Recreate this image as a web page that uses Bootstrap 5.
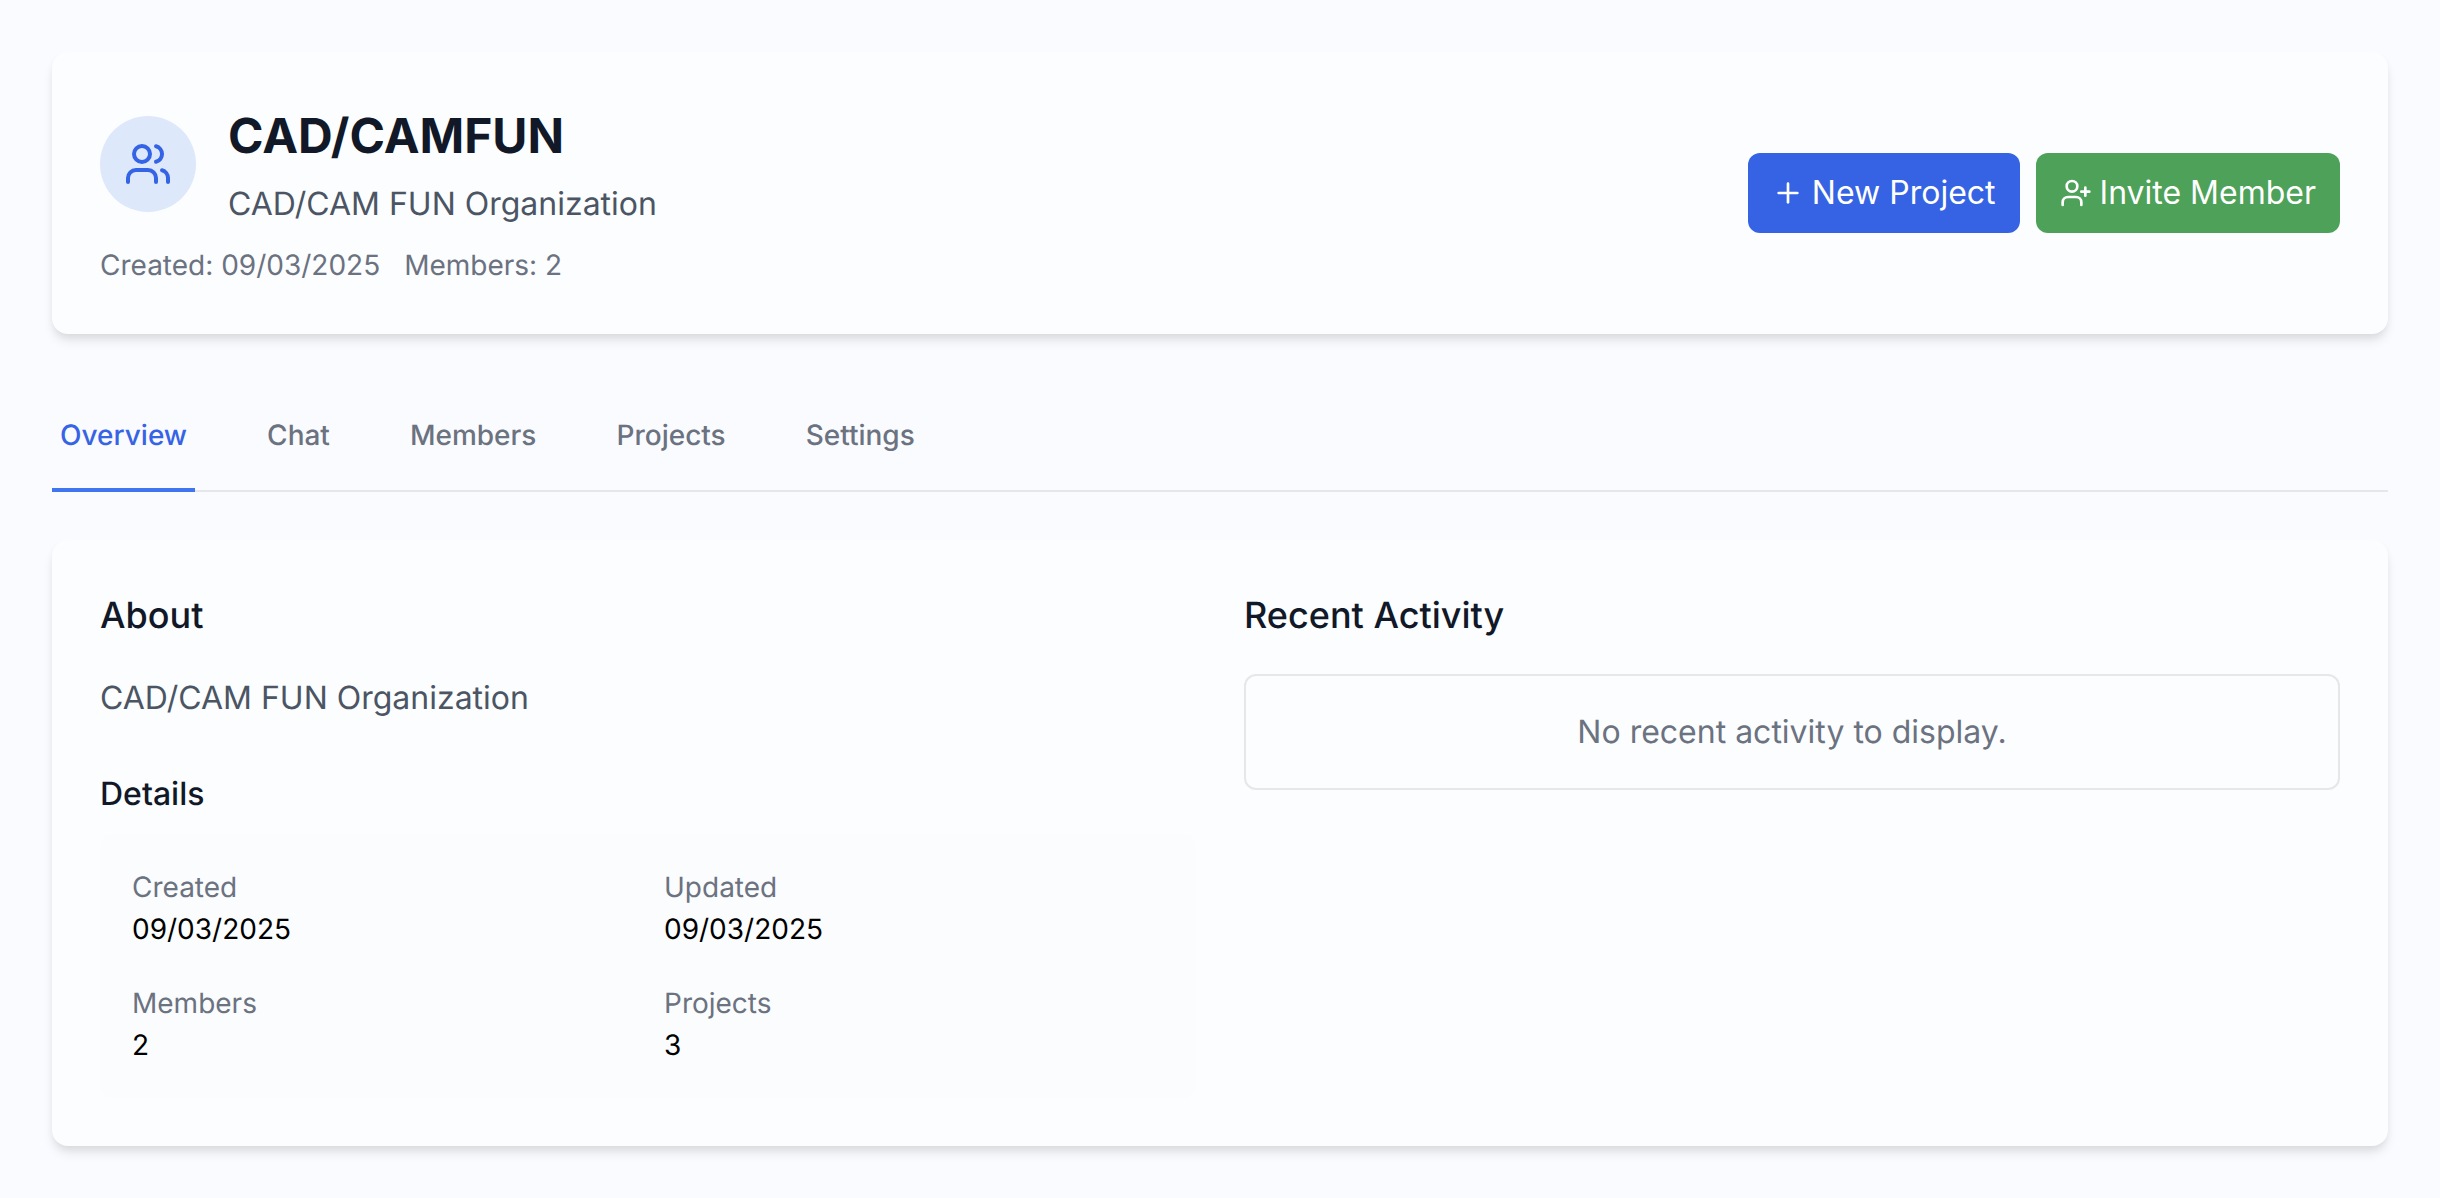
<!DOCTYPE html>
<html lang="en">
<head>
    <meta charset="UTF-8">
    <meta name="viewport" content="width=device-width, initial-scale=1.0">
    <link href="https://cdn.jsdelivr.net/npm/bootstrap@5.3.3/dist/css/bootstrap.min.css" rel="stylesheet">
    <script src="https://cdn.jsdelivr.net/npm/bootstrap@5.3.3/dist/js/bootstrap.bundle.min.js"></script>
    <title>CAD/CAMFUN</title>
    <style>
        body{
            background-color: #fafbfe;
            font-family: Inter, "Liberation Sans", sans-serif;
            color: #111827;
            text-rendering: geometricPrecision;
        }
        .page{
            padding: 52px;
        }
        .org-card{
            background-color: #fcfdff;
            border: 0;
            border-radius: 16px;
            box-shadow: 0 8px 12px -2px rgba(0,0,0,.1), 0 4px 8px -2px rgba(0,0,0,.06);
        }
        .org-card .card-body{
            padding: 48px;
        }
        .org-head{
            gap: 32px;
        }
        .org-icon{
            width: 96px;
            height: 96px;
            background-color: #dee8fb;
            color: #3563e5;
        }
        .org-name{
            font-size: 48px;
            line-height: 72px;
            font-weight: 700;
            color: #111827;
            margin: 0 0 8px;
        }
        .org-sub{
            font-size: 32px;
            line-height: 48px;
            color: #4b5563;
            margin: 0;
        }
        .org-meta{
            font-size: 28px;
            line-height: 42px;
            color: #6b7280;
            margin-top: 16px;
            gap: 24px;
        }
        .act-btn{
            height: 80px;
            padding: 0 24px;
            font-size: 32px;
            line-height: 48px;
            border: 0;
            border-radius: 12px;
            color: #fff;
            gap: 8px;
        }
        .btn-new{ background-color: #3663e4; }
        .btn-invite{ background-color: #4da158; }
        .nav-tabs{
            margin-top: 48px;
            margin-bottom: 48px;
            gap: 64px;
            border-bottom: 2px solid #e5e7eb;
        }
        .nav-tabs .nav-link{
            margin-bottom: -2px;
            padding: 32px 8px;
            font-size: 28px;
            line-height: 42px;
            font-weight: 500;
            color: #6b7280;
            border: 0;
            border-bottom: 4px solid transparent;
            border-radius: 0;
            background: none;
        }
        .nav-tabs .nav-link.active{
            color: #3763e5;
            border-bottom-color: #3f75ee;
            background: none;
        }
        .split{
            --bs-gutter-x: 48px;
        }
        .sec-title{
            font-size: 36px;
            line-height: 54px;
            font-weight: 500;
            color: #111827;
            margin: 0 0 32px;
        }
        .about-text{
            font-size: 32px;
            line-height: 48px;
            color: #4b5563;
            margin: 0 0 48px;
        }
        .sub-title{
            font-size: 32px;
            line-height: 48px;
            font-weight: 500;
            color: #111827;
            margin: 0 0 16px;
        }
        .details{
            background-color: #fbfcfe;
            border-radius: 12px;
            padding: 32px;
        }
        .details .row{
            --bs-gutter-x: 32px;
            --bs-gutter-y: 32px;
        }
        .lbl{
            font-size: 28px;
            line-height: 42px;
            color: #6b7280;
        }
        .val{
            font-size: 28px;
            line-height: 42px;
            color: #000;
        }
        .empty-box{
            border: 2px solid #e5e7eb;
            border-radius: 12px;
            padding: 32px;
            font-size: 32px;
            line-height: 48px;
            color: #6b7280;
        }
    </style>
</head>
<body>
    <div class="page">
        <div class="card org-card">
            <div class="card-body d-flex justify-content-between align-items-center">
                <div>
                    <div class="org-head d-flex align-items-center">
                        <div class="org-icon rounded-circle d-flex align-items-center justify-content-center">
                            <svg width="48" height="48" viewBox="0 0 24 24" fill="none" stroke="currentColor" stroke-width="2" stroke-linecap="round" stroke-linejoin="round">
                                <path d="M16 21v-2a4 4 0 0 0-4-4H6a4 4 0 0 0-4 4v2"/>
                                <circle cx="9" cy="7" r="4"/>
                                <path d="M22 21v-2a4 4 0 0 0-3-3.87"/>
                                <path d="M16 3.13a4 4 0 0 1 0 7.75"/>
                            </svg>
                        </div>
                        <div>
                            <h1 class="org-name">CAD/CAMFUN</h1>
                            <p class="org-sub">CAD/CAM FUN Organization</p>
                        </div>
                    </div>
                    <div class="org-meta d-flex">
                        <span>Created: 09/03/2025</span>
                        <span>Members: 2</span>
                    </div>
                </div>
                <div class="d-flex gap-3">
                    <button type="button" class="btn act-btn btn-new d-flex align-items-center">
                        <svg width="32" height="32" viewBox="0 0 24 24" fill="none" stroke="currentColor" stroke-width="2" stroke-linecap="round" stroke-linejoin="round">
                            <path d="M5 12h14"/>
                            <path d="M12 5v14"/>
                        </svg>
                        New Project
                    </button>
                    <button type="button" class="btn act-btn btn-invite d-flex align-items-center">
                        <svg width="32" height="32" viewBox="0 0 24 24" fill="none" stroke="currentColor" stroke-width="2" stroke-linecap="round" stroke-linejoin="round">
                            <path d="M16 21v-2a4 4 0 0 0-4-4H6a4 4 0 0 0-4 4v2"/>
                            <circle cx="9" cy="7" r="4"/>
                            <path d="M19 8v6"/>
                            <path d="M22 11h-6"/>
                        </svg>
                        Invite Member
                    </button>
                </div>
            </div>
        </div>

        <ul class="nav nav-tabs">
            <li class="nav-item"><a class="nav-link active" href="#">Overview</a></li>
            <li class="nav-item"><a class="nav-link" href="#">Chat</a></li>
            <li class="nav-item"><a class="nav-link" href="#">Members</a></li>
            <li class="nav-item"><a class="nav-link" href="#">Projects</a></li>
            <li class="nav-item"><a class="nav-link" href="#">Settings</a></li>
        </ul>

        <div class="card org-card">
            <div class="card-body">
                <div class="row split">
                    <div class="col-6">
                        <h2 class="sec-title">About</h2>
                        <p class="about-text">CAD/CAM FUN Organization</p>
                        <h3 class="sub-title">Details</h3>
                        <div class="details">
                            <div class="row">
                                <div class="col-6">
                                    <div class="lbl">Created</div>
                                    <div class="val">09/03/2025</div>
                                </div>
                                <div class="col-6">
                                    <div class="lbl">Updated</div>
                                    <div class="val">09/03/2025</div>
                                </div>
                                <div class="col-6">
                                    <div class="lbl">Members</div>
                                    <div class="val">2</div>
                                </div>
                                <div class="col-6">
                                    <div class="lbl">Projects</div>
                                    <div class="val">3</div>
                                </div>
                            </div>
                        </div>
                    </div>
                    <div class="col-6">
                        <h2 class="sec-title">Recent Activity</h2>
                        <div class="empty-box text-center">No recent activity to display.</div>
                    </div>
                </div>
            </div>
        </div>
    </div>
</body>
</html>
